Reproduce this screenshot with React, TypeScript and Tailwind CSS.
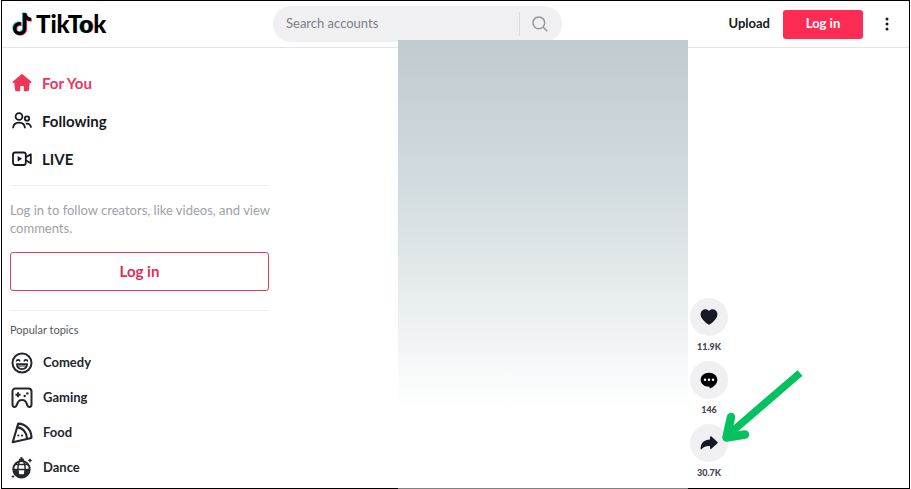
import type { ReactNode } from 'react';

const navItems = [
  { label: 'For You', icon: <HomeIcon />, active: true },
  { label: 'Following', icon: <PeopleIcon />, active: false },
  { label: 'LIVE', icon: <LiveIcon />, active: false },
];

const topics = [
  { label: 'Comedy', icon: <ComedyIcon /> },
  { label: 'Gaming', icon: <GamingIcon /> },
  { label: 'Food', icon: <FoodIcon /> },
  { label: 'Dance', icon: <DanceIcon /> },
];

function NoteShape({ color, x, y }: { color: string; x: number; y: number }) {
  return (
    <g transform={`translate(${x} ${y})`} fill="none" stroke={color} strokeWidth="3.4">
      <path d="M11.6 0v15.200a4.900 4.900 0 1 1-4.900-4.900h1.200" />
      <path d="M11.600 0c.4 3.600 2.600 5.800 6.400 6.100" />
    </g>
  );
}

function Logo() {
  return (
    <a href="#" className="flex items-center" aria-label="TikTok">
      <svg width="21" height="24" viewBox="0 0 21 24">
        <NoteShape color="#25d9d3" x={0} y={0.6} />
        <NoteShape color="#f0325a" x={1.8} y={2} />
        <NoteShape color="#000" x={0.9} y={1.3} />
      </svg>
      <span className="ml-[3px] text-[24px] leading-6 font-black text-black">
        TikT
        <span className="[text-shadow:-1px_0_0_#25d9d3,1px_0_0_#f0325a]">o</span>k
      </span>
    </a>
  );
}

function HomeIcon() {
  return (
    <svg width="20" height="20" viewBox="0 0 20 20" fill="currentColor">
      <path d="M9.100 1.400a1.400 1.400 0 0 1 1.800 0l8.200 7c.8.7.4 1.600-.5 1.600h-.9l-.8 7.200c-.1.7-.5 1.100-1.200 1.100h-3.900v-4.700c0-.5-.2-.7-.7-.7H8.900c-.5 0-.7.2-.7.7v4.700H4.300c-.7 0-1.100-.4-1.200-1.100L2.300 10h-.9c-.9 0-1.300-.9-.5-1.600z" />
    </svg>
  );
}

function PeopleIcon() {
  return (
    <svg width="20" height="20" viewBox="0 0 20 20" fill="none" stroke="currentColor" strokeWidth="1.8">
      <circle cx="7" cy="5.500" r="3.400" />
      <path d="M1 17.300c.2-3.600 2.500-5.600 6-5.600s5.800 2 6 5.600" />
      <circle cx="15" cy="7.500" r="2.200" />
      <path d="M13.800 12.700c3-.7 5 1.200 5.300 4" />
    </svg>
  );
}

function LiveIcon() {
  return (
    <svg width="20" height="20" viewBox="0 0 20 20" fill="none" stroke="currentColor" strokeWidth="1.8" strokeLinejoin="round">
      <rect x="1" y="3.500" width="12.800" height="12.500" rx="2.200" />
      <path d="M13.800 8.300l5-3v9l-5-3" />
      <path d="M5.700 6.900v5.600l4.400-2.800z" fill="currentColor" stroke="none" />
    </svg>
  );
}

function ComedyIcon() {
  return (
    <svg width="22" height="22" viewBox="0 0 22 22" fill="none" stroke="currentColor" strokeWidth="2" strokeLinecap="round">
      <circle cx="11" cy="11" r="9.500" />
      <path d="M5.500 8.800c.7-1.300 2.500-1.300 3.200 0M13.300 8.800c.7-1.300 2.500-1.300 3.200 0" strokeWidth="1.600" />
      <path d="M5.800 12.200h10.400c-.3 3-2.200 4.900-5.200 4.900s-4.900-1.900-5.200-4.900z" strokeWidth="1.700" strokeLinejoin="round" />
      <path d="M7.500 14h7" strokeWidth="1.200" />
    </svg>
  );
}

function GamingIcon() {
  return (
    <svg width="22" height="22" viewBox="0 0 22 22" fill="none" stroke="currentColor" strokeWidth="2" strokeLinejoin="round">
      <path d="M4.500 1.500h13c2 0 3 1.200 3 3v13c0 3-3 3.200-4 1l-1.600-3.600c-.9-1.500-1.900-1.900-3.900-1.900s-3 .4-3.900 1.900L5.500 18.500c-1 2.200-4 2-4-1v-13c0-1.800 1-3 3-3z" />
      <path d="M7 5.200v5M4.500 7.700h5" strokeWidth="1.900" />
      <circle cx="16.400" cy="6.400" r="1.200" fill="currentColor" stroke="none" />
      <circle cx="13.700" cy="9" r="1.200" fill="currentColor" stroke="none" />
    </svg>
  );
}

function FoodIcon() {
  return (
    <svg width="22" height="22" viewBox="0 0 22 22" fill="none" stroke="currentColor" strokeWidth="2.100" strokeLinejoin="round" strokeLinecap="round">
      <path d="M7.200 1.600L1.700 20.200l18.700-4.300C20.800 8.500 14.800 1.800 7.200 1.600z" />
      <path d="M6.400 5.400c5.300.4 9.300 5 9.500 11" />
      <circle cx="7.300" cy="13.500" r="1.100" fill="currentColor" stroke="none" />
      <circle cx="11" cy="13.500" r="1.100" fill="currentColor" stroke="none" />
    </svg>
  );
}

function DanceIcon() {
  return (
    <svg width="22" height="22" viewBox="0 0 22 22" fill="none" stroke="currentColor" strokeWidth="1.400">
      <path d="M10.500 0v3M8 2.800h5" strokeWidth="2" />
      <circle cx="10.500" cy="12.300" r="8.200" strokeWidth="2" />
      <path d="M8.200 5c-1.500 4-1.500 10.600 0 14.600M12.800 5c1.500 4 1.500 10.600 0 14.600M2.500 12.500h16" />
      <path d="M4.500 7.500h12" />
      <path d="M2.500 12.500h4.700l.7 7-3.900-2zM18.500 12.500h-4.700l-.7 7 3.900-2zM7.600 17.200h5.800l-.6 3H8.200z" fill="currentColor" stroke="none" />
      <path d="M19 1l.8 1.700 1.700.8-1.700.8L19 6l-.8-1.700-1.700-.8 1.700-.8zM2 17.500l.6 1.400 1.400.6-1.400.6L2 21.500l-.6-1.400L0 19.500l1.400-.6z" fill="currentColor" stroke="none" />
    </svg>
  );
}

function ActionButton({ label, count, children }: { label: string; count: string; children: ReactNode }) {
  return (
    <div className="flex flex-col items-center">
      <button
        type="button"
        aria-label={label}
        className="relative flex h-[38px] w-[38px] items-center justify-center rounded-full bg-[#f0f0f3] text-[#161823]"
      >
        {children}
      </button>
      <span className="mt-[5px] text-[9px] leading-3 font-black text-[#45464e]">{count}</span>
    </div>
  );
}

function Header() {
  return (
    <header className="flex h-[47px] items-center border-b border-[#e3e4e8] pr-[14px] pl-[10px]">
      <div className="w-[261px] shrink-0">
        <Logo />
      </div>
      <form className="flex h-9 w-[289px] items-center rounded-full bg-[#f0f0f3] pl-[13px]">
        <input
          type="text"
          aria-label="Search accounts"
          placeholder="Search accounts"
          className="min-w-0 flex-1 bg-transparent text-[13px] text-[#161823] outline-none placeholder:text-[#7d7e84]"
        />
        <span className="h-6 w-px bg-[#dcdce0]" />
        <button type="button" aria-label="Search" className="flex h-9 w-[42px] items-center pl-3 text-[#96979c]">
          <svg width="16" height="16" viewBox="0 0 16 16" fill="none" stroke="currentColor" strokeWidth="1.500">
            <circle cx="6.800" cy="6.800" r="5.900" />
            <path d="M11 11l4.300 4.300" />
          </svg>
        </button>
      </form>
      <div className="ml-auto flex items-center">
        <a href="#" className="text-[13px] font-bold text-[#161823]">
          Upload
        </a>
        <button type="button" className="ml-[13px] h-[29px] w-20 rounded-[3px] bg-[#fe2c55] text-[13px] font-bold text-white">
          Log in
        </button>
        <button type="button" aria-label="More" className="ml-4 flex h-6 w-4 items-center justify-center text-[#161823]">
          <svg width="4" height="14" viewBox="0 0 4 14" fill="currentColor">
            <circle cx="2" cy="2" r="1.500" />
            <circle cx="2" cy="7" r="1.500" />
            <circle cx="2" cy="12" r="1.500" />
          </svg>
        </button>
      </div>
    </header>
  );
}

function Sidebar() {
  return (
    <aside className="ml-2 w-[259px] shrink-0 pt-4">
      <nav>
        {navItems.map((item) => (
          <a
            key={item.label}
            href="#"
            className={`flex h-[38px] items-center gap-[10px] pl-0.5 text-[15px] font-bold ${
              item.active ? 'text-[#f0355b]' : 'text-[#161823]'
            }`}
          >
            {item.icon}
            {item.label}
          </a>
        ))}
      </nav>
      <div className="mt-[7px] border-t border-[#ededef] pt-[15px]">
        <p className="-mr-2 text-[13px] leading-[18px] text-[#a0a1a6]">
          Log in to follow creators, like videos, and view comments.
        </p>
        <button
          type="button"
          className="mt-[15px] h-[39px] w-full rounded-[3px] border border-[#d8405f] text-[15px] font-bold text-[#dc3154]"
        >
          Log in
        </button>
      </div>
      <div className="mt-[19px] border-t border-[#ededef] pt-[11px]">
        <h2 className="text-[11px] leading-4 text-[#55565e]">Popular topics</h2>
        <div className="mt-[7px]">
          {topics.map((topic) => (
            <a
              key={topic.label}
              href="#"
              className="flex h-[35px] items-center gap-[10px] pl-px text-[13px] font-bold text-[#25262e]"
            >
              {topic.icon}
              {topic.label}
            </a>
          ))}
        </div>
      </div>
    </aside>
  );
}

function Feed() {
  return (
    <main className="flex flex-1 pl-[129px]">
      <div className="z-10 -mt-2 -mb-px w-[290px] border-b border-[#808080] bg-linear-to-b from-[#bfcbd0] via-[#d6dfe2] via-38% to-white to-82%" />
      <div className="flex flex-col justify-end gap-2 pb-[9px] pl-0.5">
        <ActionButton label="Like" count="11.9K">
          <svg width="18" height="16" viewBox="0 0 18 16" fill="currentColor">
            <path d="M9 2C7.200-.2 4.200-.3 2.300 1.400.2 3.300.1 6.300 1.500 8.700c1.400 2.500 4 4.900 6.500 6.600.7.500 1.300.5 2 0 2.500-1.700 5.100-4.100 6.500-6.600 1.400-2.400 1.300-5.400-.8-7.300C13.800-.3 10.800-.2 9 2z" />
          </svg>
        </ActionButton>
        <ActionButton label="Comment" count="146">
          <svg width="18" height="17" viewBox="0 0 18 17">
            <path d="M9 .8c4.800 0 8.300 2.900 8.300 6.900 0 4-2.900 6.500-6.800 8.500-.6.300-.9.100-.9-.5v-1C4.500 14.800.7 12 .7 7.700.7 3.700 4.200.8 9 .8z" fill="#000" />
            <g fill="#fff">
              <circle cx="5" cy="7.700" r="1.200" />
              <circle cx="9" cy="7.700" r="1.200" />
              <circle cx="13" cy="7.700" r="1.200" />
            </g>
          </svg>
        </ActionButton>
        <ActionButton label="Share" count="30.7K">
          <svg width="18" height="14" viewBox="0 0 18 14" fill="currentColor">
            <path d="M10 1.200c0-.9.700-1.200 1.400-.6l5.800 5.100c.6.600.6 1.200 0 1.800l-5.800 5.200c-.7.600-1.400.3-1.400-.6V9.900c-3.900-.2-6.300.9-8.300 3.200-.4.500-1.100.3-1.100-.4C.6 7 4.200 3.700 10 3.500z" />
          </svg>
          {/* pointer drawn over the share button */}
          <svg className="absolute bottom-0 left-0 h-[98px] w-[120px] max-w-none" viewBox="0 0 120 98" fill="none" stroke="#06c160" strokeWidth="7.500">
            <path d="M110 9L38 71" />
            <path d="M41 53L36.500 73.500l18.500-3" strokeWidth="8.500" strokeLinecap="round" strokeLinejoin="round" />
          </svg>
        </ActionButton>
      </div>
    </main>
  );
}

export default function App() {
  return (
    <div className="mx-px flex min-h-screen flex-col border border-black bg-white font-['Lato','Liberation_Sans',sans-serif]">
      <Header />
      <div className="flex flex-1">
        <Sidebar />
        <Feed />
      </div>
    </div>
  );
}
